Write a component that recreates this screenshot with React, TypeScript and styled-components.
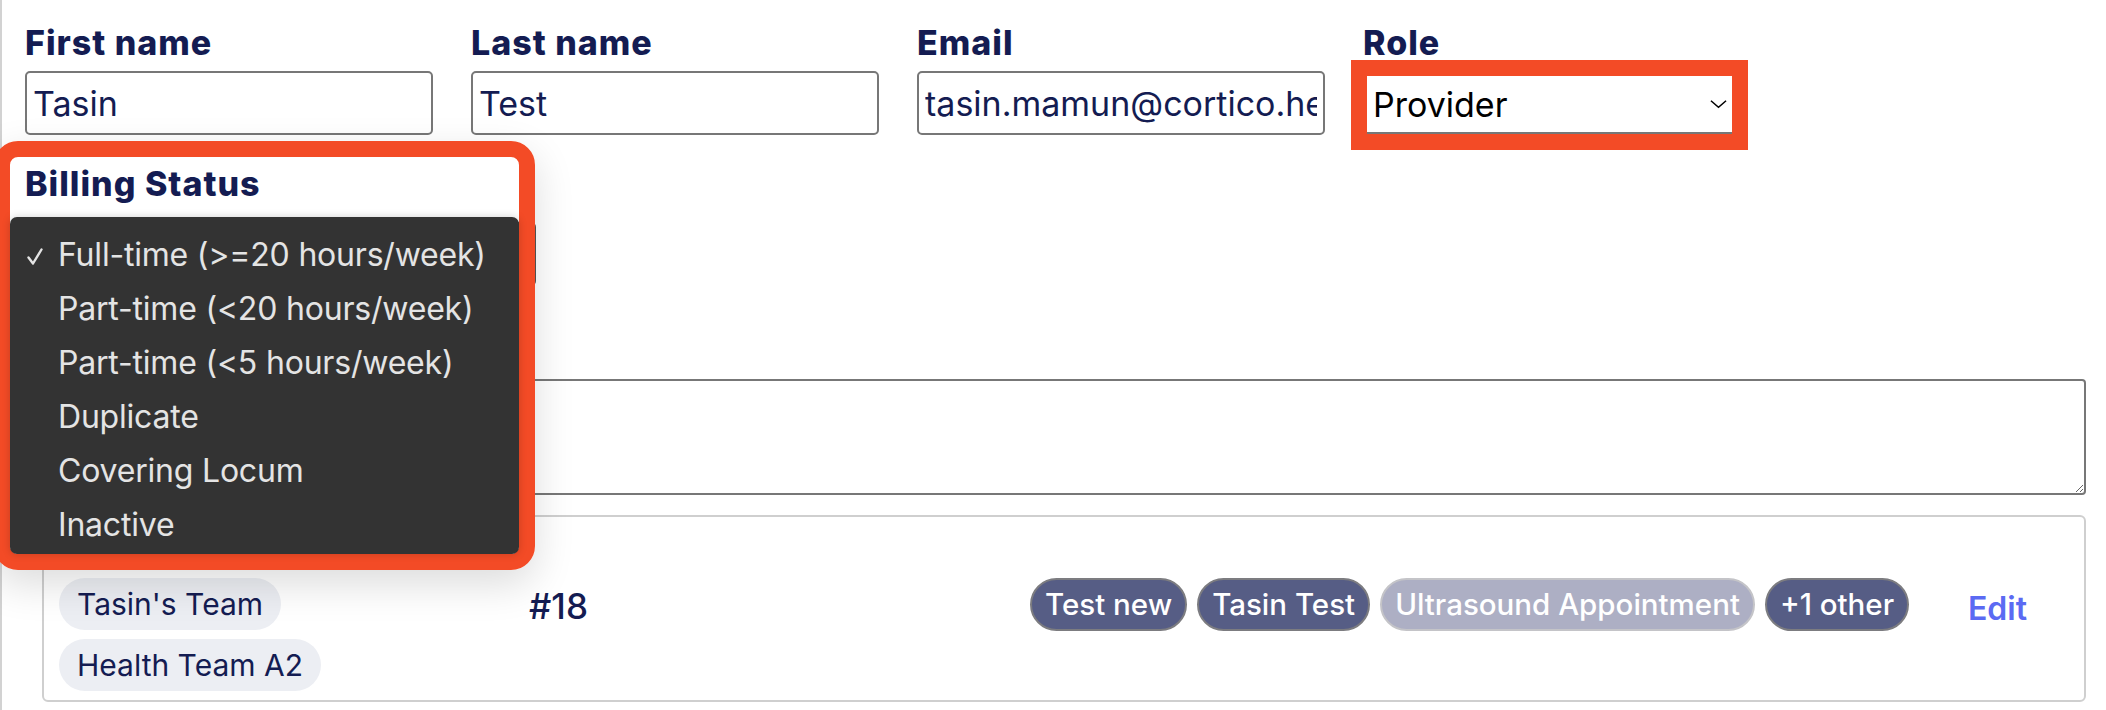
import styled, { createGlobalStyle } from "styled-components";

const GlobalStyle = createGlobalStyle`
  html, body {
    margin: 0;
    padding: 0;
    background: #ffffff;
    overflow: hidden;
  }
  body {
    font-family: Inter, "Noto Sans", "Liberation Sans", sans-serif;
    color: #141c52;
  }
`;

const NAVY = "#141c52";
const ANNOTATION = "#f34b26";

const billingOptions = [
  "Full-time (>=20 hours/week)",
  "Part-time (<20 hours/week)",
  "Part-time (<5 hours/week)",
  "Duplicate",
  "Covering Locum",
  "Inactive",
];

const tags = [
  { label: "Test new", muted: false },
  { label: "Tasin Test", muted: false },
  { label: "Ultrasound Appointment", muted: true },
  { label: "+1 other", muted: false },
];

export default function App() {
  return (
    <>
      <GlobalStyle />
      <Page>
        <FieldRow>
          <Field>
            <Label>First name</Label>
            <TextInput defaultValue="Tasin" />
          </Field>
          <Field>
            <Label>Last name</Label>
            <TextInput defaultValue="Test" />
          </Field>
          <Field>
            <Label>Email</Label>
            <TextInput defaultValue="tasin.mamun@cortico.health" />
          </Field>
          <Field>
            <Label>Role</Label>
            <HighlightedSelect>
              <SelectValue>Provider</SelectValue>
              <Chevron viewBox="0 0 18 10" aria-hidden>
                <path d="M1 1.5 L9 8.5 L17 1.5" />
              </Chevron>
            </HighlightedSelect>
          </Field>
        </FieldRow>

        <BillingField>
          <Label>Billing Status</Label>
          <BillingSelect />

          <BillingCallout>
            <Menu>
              {billingOptions.map((option, i) => (
                <MenuItem key={option}>
                  <CheckSlot>
                    {i === 0 && (
                      <CheckIcon viewBox="0 0 16 17" aria-hidden>
                        <path d="M1.5 9.5 L6 15.5 L14.5 1.5" />
                      </CheckIcon>
                    )}
                  </CheckSlot>
                  {option}
                </MenuItem>
              ))}
            </Menu>
          </BillingCallout>
        </BillingField>

        <Notes />

        <TeamCard>
          <TeamList>
            <TeamChip>Tasin's Team</TeamChip>
            <TeamChip>Health Team A2</TeamChip>
          </TeamList>
          <TeamId>#18</TeamId>
          <TagList>
            {tags.map((tag) => (
              <Tag key={tag.label} $muted={tag.muted}>
                {tag.label}
              </Tag>
            ))}
          </TagList>
          <EditLink>Edit</EditLink>
        </TeamCard>
      </Page>
    </>
  );
}

const Page = styled.main`
  min-height: 710px;
  box-sizing: border-box;
  border-left: 2px solid #d2d2d2;
  padding: 24px 20px 0 23px;
  display: flex;
  flex-direction: column;
`;

const FieldRow = styled.div`
  display: grid;
  grid-template-columns: repeat(4, 408px);
  column-gap: 38px;
`;

const Field = styled.div`
  display: flex;
  flex-direction: column;
  align-items: flex-start;
`;

const Label = styled.label`
  font-size: 34px;
  line-height: 38px;
  font-weight: 800;
  color: ${NAVY};
  letter-spacing: 1px;
`;

const TextInput = styled.input`
  box-sizing: border-box;
  margin-top: 9px;
  width: 408px;
  height: 64px;
  padding: 0 6px;
  border: 2px solid #777777;
  border-radius: 5px;
  font-family: inherit;
  font-size: 34px;
  color: ${NAVY};
  background: #fff;
  outline: none;
`;

const HighlightedSelect = styled.div`
  box-sizing: border-box;
  margin: 14px 0 0 4px;
  width: 365px;
  height: 58px;
  padding: 0 5px 0 6px;
  display: flex;
  align-items: center;
  justify-content: space-between;
  background: #fff;
  border-bottom: 2px solid #777777;
  outline: 16px solid ${ANNOTATION};
`;

const SelectValue = styled.span`
  font-size: 34px;
  color: #000;
`;

const Chevron = styled.svg`
  width: 17px;
  height: 10px;
  fill: none;
  stroke: #000;
  stroke-width: 1.6;
`;

const BillingField = styled.div`
  position: relative;
  margin-top: 30px;
  display: flex;
  flex-direction: column;
  align-items: flex-start;
`;

const BillingSelect = styled.div`
  box-sizing: border-box;
  margin-top: 19px;
  width: 511px;
  height: 64px;
  border: 2px solid #555;
  border-radius: 5px;
`;

/* annotation ring around the open native menu */
const BillingCallout = styled.div`
  position: absolute;
  left: -31px;
  top: -24px;
  width: 541px;
  height: 429px;
  box-sizing: border-box;
  border: 16px solid ${ANNOTATION};
  border-radius: 24px;
  box-shadow: 0 14px 40px rgba(0, 0, 0, 0.14);
  display: flex;
  flex-direction: column;
  justify-content: flex-end;
`;

const Menu = styled.ul`
  list-style: none;
  margin: 0;
  padding: 11px 0 3px 17px;
  height: 337px;
  box-sizing: border-box;
  background: #333333;
  border-radius: 7px;
  box-shadow: 0 0 8px rgba(0, 0, 0, 0.18);
`;

const MenuItem = styled.li`
  display: flex;
  align-items: center;
  height: 54px;
  line-height: 54px;
  font-size: 32px;
  letter-spacing: -0.2px;
  color: #e4e4e4;
  white-space: nowrap;
`;

const CheckSlot = styled.span`
  width: 31px;
  height: 54px;
  display: flex;
  align-items: center;
`;

const CheckIcon = styled.svg`
  width: 16px;
  height: 17px;
  margin-top: 3px;
  fill: none;
  stroke: #e4e4e4;
  stroke-width: 2.4;
  stroke-linecap: round;
  stroke-linejoin: round;
`;

const Notes = styled.textarea`
  box-sizing: border-box;
  margin-top: 93px;
  width: 2061px;
  height: 116px;
  border: 2px solid #777777;
  border-radius: 4px;
  font-family: inherit;
  font-size: 30px;
  outline: none;
`;

const TeamCard = styled.section`
  box-sizing: border-box;
  margin: 20px 0 0 17px;
  width: 2044px;
  height: 187px;
  padding: 61px 57px 8px 15px;
  border: 2px solid #cfcfcf;
  border-radius: 6px;
  display: grid;
  grid-template-columns: 470px 501px 1fr auto;
  align-items: start;
`;

const TeamList = styled.div`
  display: flex;
  flex-direction: column;
  align-items: flex-start;
  gap: 9px;
`;

const TeamChip = styled.span`
  height: 52px;
  line-height: 52px;
  padding: 0 18px;
  border-radius: 26px;
  background: #eceef3;
  font-size: 30px;
  color: ${NAVY};
`;

const TeamId = styled.span`
  line-height: 53px;
  padding-top: 2px;
  font-size: 35px;
  font-weight: 500;
  color: ${NAVY};
`;

const TagList = styled.div`
  display: flex;
  gap: 10px;
`;

const Tag = styled.span<{ $muted: boolean }>`
  box-sizing: border-box;
  height: 53px;
  line-height: 49px;
  padding: 0 13px;
  border-radius: 27px;
  border: 2px solid ${(p) => (p.$muted ? "#c4c4c8" : "#7c7c80")};
  background: ${(p) => (p.$muted ? "#adafc4" : "#565d85")};
  color: #ffffff;
  font-size: 29.5px;
  font-weight: 500;
  white-space: nowrap;
`;

const EditLink = styled.a`
  line-height: 53px;
  padding-top: 4px;
  font-size: 32px;
  font-weight: 600;
  color: #5b6af3;
  cursor: pointer;
`;
